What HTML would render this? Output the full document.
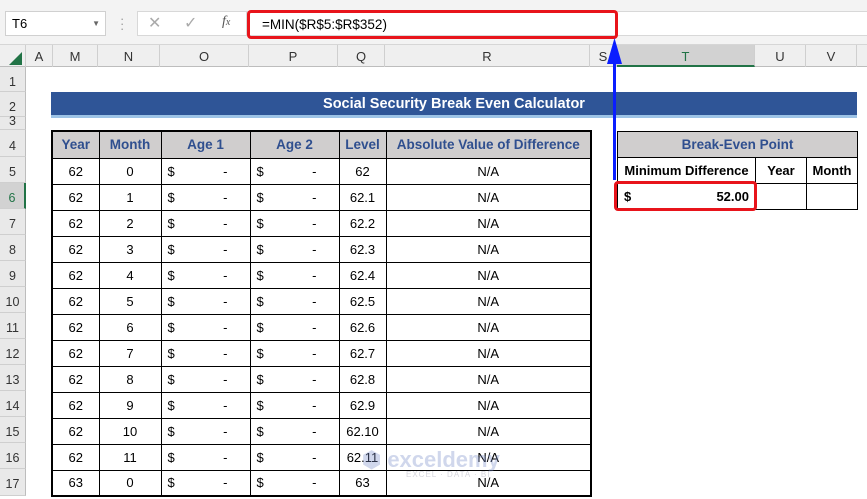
<!DOCTYPE html>
<html><head><meta charset="utf-8"><style>
*{margin:0;padding:0;box-sizing:border-box}
body{width:867px;height:496px;overflow:hidden;background:#fff;font-family:"Liberation Sans",sans-serif;position:relative;font-size:13px;color:#000}
.a{position:absolute}
.ch{position:absolute;top:45px;height:22px;border-right:1px solid #cfcfcf;text-align:center;line-height:24px;font-size:13px;color:#333}
.rh{position:absolute;left:0;width:26px;border-bottom:1px solid #cfcfcf;text-align:center;font-size:12.5px;color:#333;background:#e9e9e9;border-right:1px solid #bdbdbd}
table{border-collapse:collapse;position:absolute;table-layout:fixed}
td{border:1px solid #000;text-align:center;height:26px;font-size:13px;padding:0}
th{border:1px solid #000;background:#d0cece;color:#2f4f8f;font-size:13.5px;height:27px;font-weight:bold}
.m td.d{text-align:left;padding-left:6px;position:relative}
.d span{position:absolute;right:22px}
</style></head><body>
<div class="a" style="left:0;top:0;width:867px;height:45px;background:#f3f3f3;border-bottom:1px solid #d6d6d6"></div>
<div class="a" style="left:5px;top:11px;width:101px;height:25px;background:#fff;border:1px solid #d0d0d0;line-height:23px;padding-left:6px;font-size:13px">T6<span style="position:absolute;right:5px;top:0;font-size:8px;color:#666">▼</span></div>
<div class="a" style="left:120px;top:16px;color:#999;font-size:13px;line-height:5px">·<br>·<br>·</div>
<div class="a" style="left:137px;top:11px;width:110px;height:25px;background:#fff;border:1px solid #d8d8d8"></div>
<div class="a" style="left:148px;top:13px;color:#aaa;font-size:16px">✕</div>
<div class="a" style="left:184px;top:13px;color:#aaa;font-size:16px">✓</div>
<div class="a" style="left:222px;top:14px;color:#555;font-size:14px;font-style:italic;font-family:'Liberation Serif',serif">f<span style="font-size:10px">x</span></div>
<div class="a" style="left:247px;top:11px;width:620px;height:25px;background:#fff;border-top:1px solid #d8d8d8;border-bottom:1px solid #d8d8d8"></div>
<div class="a" style="left:247px;top:10px;width:371px;height:29px;border:3px solid #e8141b;border-radius:4px;line-height:23px;padding-left:12px;font-size:13.5px">=MIN($R$5:$R$352)</div>
<div class="a" style="left:0;top:45px;width:867px;height:22px;background:#efefef;border-bottom:1px solid #bdbdbd"></div>
<div class="ch" style="left:0;width:26px"><span style="position:absolute;left:9px;top:7px;width:0;height:0;border-left:13px solid transparent;border-bottom:13px solid #217346"></span></div>
<div class="ch" style="left:26px;width:27px">A</div>
<div class="ch" style="left:53px;width:45px">M</div>
<div class="ch" style="left:98px;width:62px">N</div>
<div class="ch" style="left:160px;width:89px">O</div>
<div class="ch" style="left:249px;width:89px">P</div>
<div class="ch" style="left:338px;width:47px">Q</div>
<div class="ch" style="left:385px;width:205px">R</div>
<div class="ch" style="left:590px;width:27px">S</div>
<div class="ch" style="left:617px;width:138px;background:#d2d2d2;border-bottom:2px solid #217346;color:#217346">T</div>
<div class="ch" style="left:755px;width:51px">U</div>
<div class="ch" style="left:806px;width:51px">V</div>
<div class="rh" style="top:67px;height:25px;line-height:30px">1</div>
<div class="rh" style="top:92px;height:25px;line-height:30px">2</div>
<div class="rh" style="top:117px;height:13px;line-height:8px">3</div>
<div class="rh" style="top:130px;height:27px;line-height:32px">4</div>
<div class="rh" style="top:157px;height:26px;line-height:30px">5</div>
<div class="rh" style="top:183px;height:26px;line-height:30px;background:#d2d2d2;color:#217346;border-right:2px solid #217346">6</div>
<div class="rh" style="top:209px;height:26px;line-height:30px">7</div>
<div class="rh" style="top:235px;height:26px;line-height:30px">8</div>
<div class="rh" style="top:261px;height:26px;line-height:30px">9</div>
<div class="rh" style="top:287px;height:26px;line-height:30px">10</div>
<div class="rh" style="top:313px;height:26px;line-height:30px">11</div>
<div class="rh" style="top:339px;height:26px;line-height:30px">12</div>
<div class="rh" style="top:365px;height:26px;line-height:30px">13</div>
<div class="rh" style="top:391px;height:26px;line-height:30px">14</div>
<div class="rh" style="top:417px;height:26px;line-height:30px">15</div>
<div class="rh" style="top:443px;height:26px;line-height:30px">16</div>
<div class="rh" style="top:469px;height:27px;line-height:30px">17</div>
<div class="a" style="left:51px;top:92px;width:806px;height:26px;background:#2f5597;border-bottom:3px solid #9dc3e6;color:#fff;font-weight:bold;font-size:14.5px;text-align:center;line-height:24px">Social Security Break Even Calculator</div>
<table class="m" style="left:51px;top:130px;width:539px;border:2px solid #000">
<colgroup><col style="width:47px"><col style="width:62px"><col style="width:89px"><col style="width:89px"><col style="width:47px"><col style="width:205px"></colgroup>
<tr><th>Year</th><th>Month</th><th>Age 1</th><th>Age 2</th><th>Level</th><th>Absolute Value of Difference</th></tr>
<tr><td>62</td><td>0</td><td class="d">$<span>-</span></td><td class="d">$<span>-</span></td><td>62</td><td>N/A</td></tr>
<tr><td>62</td><td>1</td><td class="d">$<span>-</span></td><td class="d">$<span>-</span></td><td>62.1</td><td>N/A</td></tr>
<tr><td>62</td><td>2</td><td class="d">$<span>-</span></td><td class="d">$<span>-</span></td><td>62.2</td><td>N/A</td></tr>
<tr><td>62</td><td>3</td><td class="d">$<span>-</span></td><td class="d">$<span>-</span></td><td>62.3</td><td>N/A</td></tr>
<tr><td>62</td><td>4</td><td class="d">$<span>-</span></td><td class="d">$<span>-</span></td><td>62.4</td><td>N/A</td></tr>
<tr><td>62</td><td>5</td><td class="d">$<span>-</span></td><td class="d">$<span>-</span></td><td>62.5</td><td>N/A</td></tr>
<tr><td>62</td><td>6</td><td class="d">$<span>-</span></td><td class="d">$<span>-</span></td><td>62.6</td><td>N/A</td></tr>
<tr><td>62</td><td>7</td><td class="d">$<span>-</span></td><td class="d">$<span>-</span></td><td>62.7</td><td>N/A</td></tr>
<tr><td>62</td><td>8</td><td class="d">$<span>-</span></td><td class="d">$<span>-</span></td><td>62.8</td><td>N/A</td></tr>
<tr><td>62</td><td>9</td><td class="d">$<span>-</span></td><td class="d">$<span>-</span></td><td>62.9</td><td>N/A</td></tr>
<tr><td>62</td><td>10</td><td class="d">$<span>-</span></td><td class="d">$<span>-</span></td><td>62.10</td><td>N/A</td></tr>
<tr><td>62</td><td>11</td><td class="d">$<span>-</span></td><td class="d">$<span>-</span></td><td>62.11</td><td>N/A</td></tr>
<tr><td>63</td><td>0</td><td class="d">$<span>-</span></td><td class="d">$<span>-</span></td><td>63</td><td>N/A</td></tr>
</table>
<table style="left:617px;top:131px;width:240px">
<colgroup><col style="width:138px"><col style="width:51px"><col style="width:51px"></colgroup>
<tr><th colspan="3" style="height:26px">Break-Even Point</th></tr>
<tr><td style="font-weight:bold">Minimum Difference</td><td style="font-weight:bold">Year</td><td style="font-weight:bold">Month</td></tr>
<tr><td style="font-weight:bold;text-align:left;padding:0 6px;position:relative">$<span style="position:absolute;right:6px">52.00</span></td><td></td><td></td></tr>
</table>
<div class="a" style="left:614px;top:181px;width:143px;height:30px;border:3px solid #e8141b;border-radius:4px"></div>
<svg class="a" style="left:600px;top:35px" width="30" height="150"><line x1="14.5" y1="145" x2="14.5" y2="22" stroke="#0a1eff" stroke-width="3"/><polygon points="14.5,3 7,29 22,29" fill="#0a1eff"/></svg>
<div class="a" style="left:362px;top:447px;color:rgba(120,140,200,0.35);font-weight:bold;font-size:22px">⬢ exceldemy</div>
<div class="a" style="left:406px;top:470px;color:rgba(150,150,170,0.4);font-size:8px;letter-spacing:1px">EXCEL · DATA · BI</div>
</body></html>
